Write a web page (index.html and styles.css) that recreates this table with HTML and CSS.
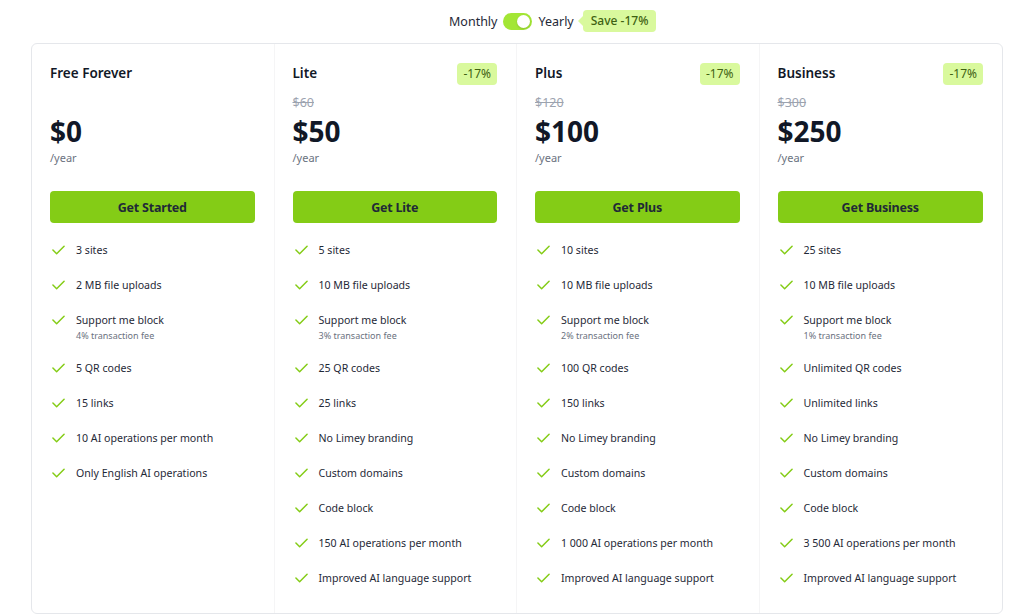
FILE: index.html
```html
<!DOCTYPE html>
<html lang="en">
<head>
<meta charset="utf-8">
<title>Pricing</title>
<link rel="stylesheet" href="styles.css">
</head>
<body>
<div class="billing">
  <span class="billing-label">Monthly</span>
  <span class="switch"><span class="knob"></span></span>
  <span class="billing-label">Yearly</span>
  <span class="save">Save -17%</span>
</div>

<div class="plans">
  <section class="plan">
    <div class="plan-head"><h2 class="plan-name">Free Forever</h2></div>
    <div class="old-price"></div>
    <div class="price">$0</div>
    <div class="period">/year</div>
    <button class="cta">Get Started</button>
    <ul class="features">
      <li><svg class="check" viewBox="0 0 14 10"><path d="M1 5l4 4 8-8"/></svg><div>3 sites</div></li>
      <li><svg class="check" viewBox="0 0 14 10"><path d="M1 5l4 4 8-8"/></svg><div>2 MB file uploads</div></li>
      <li><svg class="check" viewBox="0 0 14 10"><path d="M1 5l4 4 8-8"/></svg><div>Support me block<span class="note">4% transaction fee</span></div></li>
      <li><svg class="check" viewBox="0 0 14 10"><path d="M1 5l4 4 8-8"/></svg><div>5 QR codes</div></li>
      <li><svg class="check" viewBox="0 0 14 10"><path d="M1 5l4 4 8-8"/></svg><div>15 links</div></li>
      <li><svg class="check" viewBox="0 0 14 10"><path d="M1 5l4 4 8-8"/></svg><div>10 AI operations per month</div></li>
      <li><svg class="check" viewBox="0 0 14 10"><path d="M1 5l4 4 8-8"/></svg><div>Only English AI operations</div></li>
    </ul>
  </section>

  <section class="plan">
    <div class="plan-head"><h2 class="plan-name">Lite</h2><span class="badge">-17%</span></div>
    <div class="old-price">$60</div>
    <div class="price">$50</div>
    <div class="period">/year</div>
    <button class="cta">Get Lite</button>
    <ul class="features">
      <li><svg class="check" viewBox="0 0 14 10"><path d="M1 5l4 4 8-8"/></svg><div>5 sites</div></li>
      <li><svg class="check" viewBox="0 0 14 10"><path d="M1 5l4 4 8-8"/></svg><div>10 MB file uploads</div></li>
      <li><svg class="check" viewBox="0 0 14 10"><path d="M1 5l4 4 8-8"/></svg><div>Support me block<span class="note">3% transaction fee</span></div></li>
      <li><svg class="check" viewBox="0 0 14 10"><path d="M1 5l4 4 8-8"/></svg><div>25 QR codes</div></li>
      <li><svg class="check" viewBox="0 0 14 10"><path d="M1 5l4 4 8-8"/></svg><div>25 links</div></li>
      <li><svg class="check" viewBox="0 0 14 10"><path d="M1 5l4 4 8-8"/></svg><div>No Limey branding</div></li>
      <li><svg class="check" viewBox="0 0 14 10"><path d="M1 5l4 4 8-8"/></svg><div>Custom domains</div></li>
      <li><svg class="check" viewBox="0 0 14 10"><path d="M1 5l4 4 8-8"/></svg><div>Code block</div></li>
      <li><svg class="check" viewBox="0 0 14 10"><path d="M1 5l4 4 8-8"/></svg><div>150 AI operations per month</div></li>
      <li><svg class="check" viewBox="0 0 14 10"><path d="M1 5l4 4 8-8"/></svg><div>Improved AI language support</div></li>
    </ul>
  </section>

  <section class="plan">
    <div class="plan-head"><h2 class="plan-name">Plus</h2><span class="badge">-17%</span></div>
    <div class="old-price">$120</div>
    <div class="price">$100</div>
    <div class="period">/year</div>
    <button class="cta">Get Plus</button>
    <ul class="features">
      <li><svg class="check" viewBox="0 0 14 10"><path d="M1 5l4 4 8-8"/></svg><div>10 sites</div></li>
      <li><svg class="check" viewBox="0 0 14 10"><path d="M1 5l4 4 8-8"/></svg><div>10 MB file uploads</div></li>
      <li><svg class="check" viewBox="0 0 14 10"><path d="M1 5l4 4 8-8"/></svg><div>Support me block<span class="note">2% transaction fee</span></div></li>
      <li><svg class="check" viewBox="0 0 14 10"><path d="M1 5l4 4 8-8"/></svg><div>100 QR codes</div></li>
      <li><svg class="check" viewBox="0 0 14 10"><path d="M1 5l4 4 8-8"/></svg><div>150 links</div></li>
      <li><svg class="check" viewBox="0 0 14 10"><path d="M1 5l4 4 8-8"/></svg><div>No Limey branding</div></li>
      <li><svg class="check" viewBox="0 0 14 10"><path d="M1 5l4 4 8-8"/></svg><div>Custom domains</div></li>
      <li><svg class="check" viewBox="0 0 14 10"><path d="M1 5l4 4 8-8"/></svg><div>Code block</div></li>
      <li><svg class="check" viewBox="0 0 14 10"><path d="M1 5l4 4 8-8"/></svg><div>1 000 AI operations per month</div></li>
      <li><svg class="check" viewBox="0 0 14 10"><path d="M1 5l4 4 8-8"/></svg><div>Improved AI language support</div></li>
    </ul>
  </section>

  <section class="plan">
    <div class="plan-head"><h2 class="plan-name">Business</h2><span class="badge">-17%</span></div>
    <div class="old-price">$300</div>
    <div class="price">$250</div>
    <div class="period">/year</div>
    <button class="cta">Get Business</button>
    <ul class="features">
      <li><svg class="check" viewBox="0 0 14 10"><path d="M1 5l4 4 8-8"/></svg><div>25 sites</div></li>
      <li><svg class="check" viewBox="0 0 14 10"><path d="M1 5l4 4 8-8"/></svg><div>10 MB file uploads</div></li>
      <li><svg class="check" viewBox="0 0 14 10"><path d="M1 5l4 4 8-8"/></svg><div>Support me block<span class="note">1% transaction fee</span></div></li>
      <li><svg class="check" viewBox="0 0 14 10"><path d="M1 5l4 4 8-8"/></svg><div>Unlimited QR codes</div></li>
      <li><svg class="check" viewBox="0 0 14 10"><path d="M1 5l4 4 8-8"/></svg><div>Unlimited links</div></li>
      <li><svg class="check" viewBox="0 0 14 10"><path d="M1 5l4 4 8-8"/></svg><div>No Limey branding</div></li>
      <li><svg class="check" viewBox="0 0 14 10"><path d="M1 5l4 4 8-8"/></svg><div>Custom domains</div></li>
      <li><svg class="check" viewBox="0 0 14 10"><path d="M1 5l4 4 8-8"/></svg><div>Code block</div></li>
      <li><svg class="check" viewBox="0 0 14 10"><path d="M1 5l4 4 8-8"/></svg><div>3 500 AI operations per month</div></li>
      <li><svg class="check" viewBox="0 0 14 10"><path d="M1 5l4 4 8-8"/></svg><div>Improved AI language support</div></li>
    </ul>
  </section>
</div>
</body>
</html>
```

FILE: styles.css
```css
* { box-sizing: border-box; }
html, body { margin: 0; padding: 0; background: #ffffff; }
body {
  font-family: "Noto Sans", "Open Sans", sans-serif;
  color: #111827;
  width: 1025px;
  height: 614px;
  overflow: hidden;
}

.billing {
  display: flex;
  align-items: center;
  gap: 6px;
  height: 22px;
  margin: 10px 0 0 449px;
}
.billing-label {
  font-size: 12.5px;
  color: #1f2937;
}
.switch {
  width: 29px;
  height: 17px;
  border-radius: 9px;
  background: #a3e635;
  display: flex;
  align-items: center;
  justify-content: flex-end;
  padding: 0 2px;
}
.knob {
  width: 13px;
  height: 13px;
  border-radius: 50%;
  background: #ffffff;
  box-shadow: 0 1px 2px rgba(0,0,0,0.15);
}
.save {
  position: relative;
  margin-left: 3px;
  height: 22px;
  line-height: 22px;
  padding: 0 8px;
  border-radius: 4px;
  background: #d9f99d;
  color: #3f6212;
  font-size: 12px;
  font-weight: 500;
}
.save::before {
  content: "";
  position: absolute;
  left: -5px;
  top: 6px;
  border-top: 5px solid transparent;
  border-bottom: 5px solid transparent;
  border-right: 5px solid #d9f99d;
}

.plans {
  margin: 11px 0 0 31px;
  width: 972px;
  height: 571px;
  border: 1px solid #e5e7eb;
  border-radius: 6px;
  display: grid;
  grid-template-columns: repeat(4, 1fr);
}
.plan {
  padding: 19px 19px 20px 18px;
  border-right: 1px solid #f5f5f6;
  display: flex;
  flex-direction: column;
}
.plan:last-child { border-right: none; }

.plan-head {
  display: flex;
  align-items: flex-start;
  justify-content: space-between;
  height: 22px;
}
.plan-name {
  margin: 0;
  font-size: 13.5px;
  line-height: 20px;
  font-weight: 600;
  color: #111827;
}
.badge {
  height: 22px;
  line-height: 22px;
  padding: 0 6px;
  border-radius: 4px;
  background: #d9f99d;
  color: #3f6212;
  font-size: 12px;
}
.old-price {
  margin-top: 9px;
  height: 18px;
  line-height: 18px;
  font-size: 12.5px;
  color: #9ca3af;
  text-decoration: line-through;
}
.price {
  font-size: 28px;
  font-weight: 700;
  line-height: 39px;
  color: #111827;
}
.period {
  font-size: 11px;
  line-height: 14px;
  color: #6b7280;
}
.cta {
  margin-top: 26px;
  height: 32px;
  width: 100%;
  border: none;
  border-radius: 4px;
  background: #84cc16;
  color: #1f2937;
  font-family: inherit;
  font-size: 12.5px;
  font-weight: 700;
  letter-spacing: -0.2px;
}

.features {
  list-style: none;
  margin: 18px 0 0 0;
  padding: 0;
  display: flex;
  flex-direction: column;
  gap: 17px;
}
.features li {
  display: flex;
  align-items: flex-start;
  gap: 11px;
  font-size: 10.6px;
  line-height: 18px;
  color: #1f2937;
}
.check {
  flex: none;
  width: 13px;
  height: 10px;
  margin: 4px 0 0 2px;
  fill: none;
  stroke: #84cc16;
  stroke-width: 1.6;
  stroke-linecap: round;
  stroke-linejoin: round;
}
.note {
  display: block;
  font-size: 9px;
  line-height: 13px;
  color: #6b7280;
}
```
